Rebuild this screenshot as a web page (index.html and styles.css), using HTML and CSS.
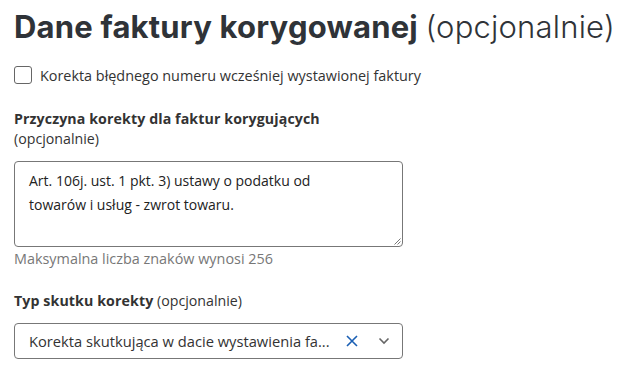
FILE: index.html
```html
<!DOCTYPE html>
<html lang="pl">
<head>
<meta charset="utf-8">
<link rel="stylesheet" href="styles.css">
</head>
<body>
<main class="form">
  <h1 class="title"><span class="title-main">Dane faktury korygowanej</span> <span class="title-opt">(opcjonalnie)</span></h1>

  <label class="check">
    <span class="check-box"></span>
    <span class="check-label">Korekta błędnego numeru wcześniej wystawionej faktury</span>
  </label>

  <div class="field field-reason">
    <div class="label"><b>Przyczyna korekty dla faktur korygujących</b><br>(opcjonalnie)</div>
    <div class="textarea">
      <div class="textarea-text">Art. 106j. ust. 1 pkt. 3) ustawy o podatku od<br>towarów i usług - zwrot towaru.</div>
      <svg class="grip" width="7" height="7" viewBox="0 0 7 7"><path d="M6.5 0.5 L0.5 6.5 M6.5 3.5 L3.5 6.5" stroke="#777" stroke-width="1" fill="none"/></svg>
    </div>
    <div class="hint">Maksymalna liczba znaków wynosi 256</div>
  </div>

  <div class="field field-type">
    <div class="label"><b>Typ skutku korekty</b> (opcjonalnie)</div>
    <div class="select">
      <span class="select-value">Korekta skutkująca w dacie wystawienia fa...</span>
      <svg class="clear" width="12" height="12" viewBox="0 0 12 12"><path d="M1 1 L11 11 M11 1 L1 11" stroke="#1a5fb4" stroke-width="1.6" fill="none"/></svg>
      <svg class="chev" width="12" height="8" viewBox="0 0 12 8"><path d="M1.5 1.5 L6 6 L10.5 1.5" stroke="#666" stroke-width="1.6" fill="none"/></svg>
    </div>
  </div>
</main>
</body>
</html>
```

FILE: styles.css
```css
html, body { margin: 0; padding: 0; background: #fff; }
body { font-family: "Open Sans", "Noto Sans", sans-serif; color: #333; }
.form { padding: 8px 15px 0 14px; }
.title {
  margin: 0;
  font-family: "Inter", "DejaVu Sans", sans-serif;
  font-size: 31px;
  line-height: 38px;
  color: #2f3338;
  letter-spacing: 0.2px;
}
.title-main { font-weight: 700; }
.title-opt { font-weight: 300; }
.check { display: flex; align-items: center; gap: 8px; margin-top: 19px; height: 20px; }
.check-box { border: 1.5px solid #666; border-radius: 3px; box-sizing: border-box; width: 18px; height: 18px; }
.check-label { font-size: 14.4px; color: #333; }
.field-reason { margin-top: 24px; }
.label { font-size: 14.2px; line-height: 20px; color: #333; }
.label b { font-weight: 700; letter-spacing: 0.1px; }
.textarea {
  position: relative;
  margin-top: 12px;
  width: 389px;
  height: 86px;
  box-sizing: border-box;
  border: 1px solid #777;
  border-radius: 4px;
  padding: 7px 14px;
}
.textarea-text { font-size: 14px; line-height: 24px; color: #222; }
.grip { position: absolute; right: 1px; bottom: 1px; }
.hint { font-size: 14.4px; line-height: 20px; color: #777; margin-top: 2px; }
.field-type { margin-top: 22px; }
.select {
  margin-top: 12px;
  width: 389px;
  height: 36px;
  box-sizing: border-box;
  border: 1px solid #777;
  border-radius: 4px;
  display: flex;
  align-items: center;
  padding: 0 12px 0 14px;
}
.select-value { flex: 1; font-size: 14.7px; color: #333; }
.clear { margin-right: 20px; }
```
